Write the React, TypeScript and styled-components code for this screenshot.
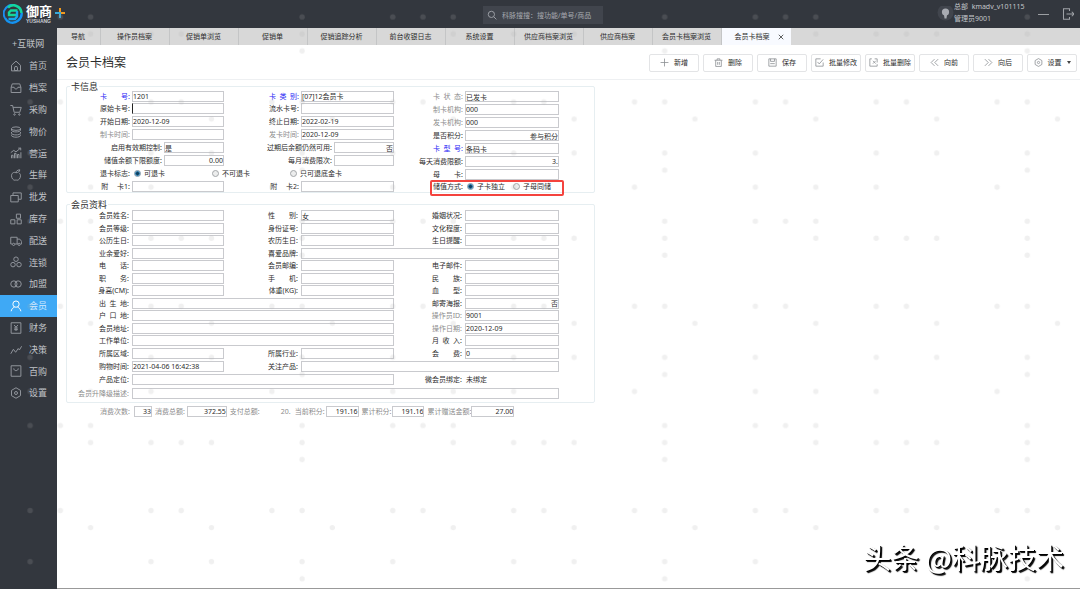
import React, { useId } from "react";
import styled, { createGlobalStyle, css } from "styled-components";

const GlobalStyle = createGlobalStyle`
  *, *::before, *::after { box-sizing: border-box; }
  body {
    margin: 0;
    background: #fff;
    color: #2c2c2c;
    font-family: "Noto Sans", "Noto Sans CJK SC", sans-serif;
    font-size: 7px;
    line-height: 11px;
  }
  button, input { font-family: inherit; font-size: inherit; line-height: inherit; color: inherit; }
`;

/* ---------- shell ---------- */

const Page = styled.div`
  display: flex;
  flex-direction: column;
  min-height: 100vh;
`;

const Header = styled.header`
  display: flex;
  align-items: center;
  justify-content: space-between;
  height: 28px;
  background: #33373e;
  color: #c3c6cb;
`;

const Brand = styled.a`
  display: flex;
  align-items: center;
  flex: 1;
  gap: 3px;
  padding-left: 3px;
  color: #fff;
  text-decoration: none;
`;

const BrandText = styled.span`
  display: flex;
  flex-direction: column;
`;

const BrandName = styled.span`
  font-size: 13px;
  line-height: 14px;
  font-weight: 700;
`;

const BrandLatin = styled.span`
  color: #c9ccd1;
  font-family: "Liberation Sans", sans-serif;
  font-size: 5px;
  line-height: 7px;
  font-weight: 700;
`;

const BrandPlus = styled.svg`
  align-self: flex-start;
  margin-top: 4px;
`;

const Search = styled.label`
  display: flex;
  align-items: center;
  gap: 5px;
  width: 120px;
  height: 18px;
  margin-top: 2px;
  margin-left: 9px;
  padding-left: 4px;
  background: #41454d;
  color: #a6a9af;
`;

const SearchInput = styled.input`
  flex: 1;
  min-width: 0;
  padding: 0;
  border: 0;
  outline: 0;
  background: transparent;
  &::placeholder { color: #a6a9af; opacity: 1; }
`;

const Account = styled.div`
  display: flex;
  flex: 1;
  align-items: center;
  justify-content: flex-end;
  padding-right: 6px;
`;

const AccountText = styled.div`
  display: flex;
  flex-direction: column;
  width: 84px;
  padding-bottom: 2px;
  line-height: 12px;
  white-space: pre;
`;

const IconButton = styled.button`
  display: flex;
  padding: 0;
  border: 0;
  background: none;
  color: #a0a3a8;
  & + & { margin-left: 13px; }
`;

const Body = styled.div`
  display: flex;
  flex: 1;
`;

const Sidebar = styled.nav`
  flex: 0 0 57px;
  background: #33373e;
  color: #c0c3c8;
  font-size: 9px;
`;

const SideHeading = styled.div`
  height: 27px;
  padding: 9px 0 0 12px;
  line-height: 13px;
`;

const SideList = styled.ul`
  margin: 0;
  padding: 0;
  list-style: none;
`;

const SideItem = styled.li`
  height: 22px;
  &:nth-child(5n) { height: 21px; }
`;

const SideLink = styled.a<{ $active?: boolean }>`
  display: flex;
  align-items: center;
  gap: 7px;
  height: 100%;
  padding: 0 0 1px 10px;
  color: ${(p) => (p.$active ? "#d5ecff" : "inherit")};
  background: ${(p) => (p.$active ? "#3fa9f5" : "transparent")};
  text-decoration: none;
  svg { color: ${(p) => (p.$active ? "#fff" : "#92969d")}; }
`;

const Main = styled.main`
  flex: 1;
  min-width: 0;
  border-bottom: 1px solid #999;
`;

const TabBar = styled.div`
  display: flex;
  height: 17px;
  background: #d8d8d8;
`;

const Tab = styled.button<{ $active?: boolean; $narrow?: boolean }>`
  display: flex;
  align-items: center;
  justify-content: center;
  gap: 8px;
  width: ${(p) => (p.$narrow ? 44 : 69)}px;
  padding: 0 ${(p) => (p.$active ? 0 : 4)}px 0 0;
  border: 0;
  border-right: 1px solid ${(p) => (p.$active ? "transparent" : "#c4c5c6")};
  background: ${(p) => (p.$active ? "#f8faff" : "transparent")};
  padding-left: ${(p) => (p.$active ? 6 : 3)}px;
  white-space: nowrap;
`;

const TitleBar = styled.div`
  display: flex;
  align-items: center;
  justify-content: space-between;
  height: 35px;
  padding: 1px 3px 0 9px;
  border-bottom: 1px solid #eef0f2;
`;

const Title = styled.h1`
  margin: 0;
  font-size: 12px;
  line-height: 18px;
  font-weight: 400;
`;

const Toolbar = styled.div`
  display: flex;
  gap: 4px;
`;

const ToolButton = styled.button`
  display: flex;
  align-items: center;
  justify-content: center;
  gap: 5px;
  width: 50px;
  height: 18px;
  padding: 0;
  border: 1px solid #e3e4e6;
  border-radius: 2px;
  background: #fff;
  white-space: nowrap;
  svg { color: #8a8d91; }
`;

/* ---------- form ---------- */

const Form = styled.form`
  display: flex;
  flex-direction: column;
  align-items: flex-start;
  padding: 6px 9px;
`;

const Section = styled.section`
  position: relative;
  display: flex;
  align-items: flex-start;
  width: 529px;
  border: 1px solid #e6eef1;
  border-radius: 2px;
  & + & { margin-top: 11px; }
`;

const SectionTitle = styled.h2`
  position: absolute;
  top: -7px;
  left: 3px;
  margin: 0;
  padding: 0 1px;
  background: #fff;
  font-size: 9px;
  line-height: 13px;
  font-weight: 400;
`;

const CardGrid = styled.div`
  display: grid;
  grid-template-columns: 157px 168px;
  grid-template-rows: 12px repeat(6, 13px) 12px;
  column-gap: 2px;
  align-items: center;
  padding-top: 3px;
`;

const CardStack = styled.div`
  display: grid;
  grid-template-columns: 163px;
  grid-template-rows: repeat(7, 13px) 11px;
  align-items: center;
  margin-left: 2px;
  padding-top: 3px;
`;

const MemberGrid = styled.div`
  display: grid;
  grid-template-columns: 157px 168px 163px;
  grid-template-rows: repeat(6, 13px 12px) 14px 13px 14px;
  column-gap: 2px;
  align-items: center;
  padding: 4px 0 2px;
`;

type Tone = "blue" | "grey" | "dark";
const tones: Record<Tone, string> = { blue: "#2a26f5", grey: "#8c8c8c", dark: "#2c2c2c" };

const FieldBox = styled.div<{ $area?: string }>`
  display: flex;
  align-items: center;
  min-width: 0;
  ${(p) => p.$area && css`grid-area: ${p.$area};`}
`;

const FieldLabel = styled.label<{ $tone: Tone; $inset: number }>`
  flex: 1;
  padding-right: ${(p) => p.$inset}px;
  color: ${(p) => tones[p.$tone]};
  text-align: right;
  white-space: pre;
`;

const TextBox = styled.input<{ $w: number; $right?: boolean; $caret?: boolean }>`
  flex: none;
  width: ${(p) => p.$w}px;
  height: 11px;
  padding: 0;
  border: 1px solid #c9cace;
  ${(p) => p.$caret && css`border-left-color: #222;`}
  border-radius: 0;
  outline: 0;
  background: #fff;
  line-height: 9px;
  text-align: ${(p) => (p.$right ? "right" : "left")};
`;

const PlainValue = styled.output<{ $w: number; $right?: boolean }>`
  flex: none;
  width: ${(p) => p.$w}px;
  padding: 0 1px;
  text-align: ${(p) => (p.$right ? "right" : "left")};
`;

const RadioRow = styled.div<{ $area?: string }>`
  display: flex;
  align-items: center;
  ${(p) => p.$area && css`grid-area: ${p.$area};`}
`;

const RadioCaption = styled.span<{ $w: number }>`
  width: ${(p) => p.$w}px;
  padding-right: 2px;
  text-align: right;
`;

const RadioOption = styled.label<{ $w: number }>`
  display: flex;
  align-items: center;
  gap: 3px;
  width: ${(p) => p.$w}px;
  padding-left: 2px;
  white-space: nowrap;
`;

const Radio = styled.input`
  appearance: none;
  width: 7px;
  height: 7px;
  margin: 0;
  border: 1px solid #a3a6a9;
  border-radius: 50%;
  background: #eceded;
  &:checked {
    border-color: #7f97a8;
    background: radial-gradient(circle, #10405f 0 1px, #2a7db0 2px, #d5e4ec 3px);
  }
`;

const Callout = styled.div`
  position: absolute;
  right: 30px;
  bottom: -4px;
  width: 134px;
  height: 16px;
  border: 2px solid #f4433e;
  border-radius: 2px;
  pointer-events: none;
`;

const Stats = styled.div`
  display: flex;
  align-items: center;
  margin-top: 3px;
  padding-left: 34px;
`;

const StatBox = styled.div<{ $gap: number }>`
  display: flex;
  align-items: center;
  gap: ${(p) => p.$gap}px;
  margin-right: 3px;
  color: ${tones.grey};
  white-space: nowrap;
  input { color: #2c2c2c; }
`;

/* ---------- overlays ---------- */

const DotLayer = styled.svg`
  position: fixed;
  inset: 0;
  width: 100%;
  height: 100%;
  pointer-events: none;
`;

const Signature = styled.div`
  position: fixed;
  right: 16px;
  bottom: 12px;
  color: #fff;
  font-family: "Noto Sans CJK SC", sans-serif;
  font-size: 28px;
  line-height: 40px;
  text-shadow: 1px 1px 0 #000, 2px 2px 1px #000;
  white-space: nowrap;
  pointer-events: none;
`;

/* ---------- icons ---------- */

const iconPaths: Record<string, React.ReactNode> = {
  home: <><path d="M2 7 8 1.5 14 7v7.5H2z" /><path d="M6 14v-3.500a2 2 0 0 1 4 0V14M6 14h4" /></>,
  file: <><path d="M1.500 7 3 2.500h10L14.500 7v7h-13zM1.500 7H5.500c.4 3 4.600 3 5 0h4" /></>,
  cart: <><path d="M.5 2h3l2 9h7.500l2-6.500H4.200" /><circle cx="6" cy="14" r="1" /><circle cx="12.500" cy="14" r="1" /></>,
  stack: <><ellipse cx="8" cy="3.500" rx="6" ry="2.300" /><path d="M2 3.500v2c0 3.200 12 3.200 12 0v-2M2 8v1.500c0 3.200 12 3.200 12 0V8M2 11.500v1c0 3.200 12 3.200 12 0v-1" /></>,
  chart: <><path d="M2 15v-4h2v4M6 15V8.500h2V15M10 15v-5h2v5M14.500 15V7M1 7.500l4-3 3 2L14 1.500M11 1.500h3.300v3" /></>,
  apple: <><path d="M8 5c-3-1.500-6 .5-6 4s2.500 6 4.500 6c1 0 1-.5 1.500-.5s.5.5 1.500.5c2 0 4.500-2.500 4.500-6 0-1.500-.5-2.500-1.500-3.500M8 5c0-2 1.500-3.500 5-4 0 2.500-2 4-5 4z" /></>,
  copy: <><path d="M1 6h10v8.500H1zM4 6V2.500h11V11h-4" /></>,
  blocks: <><path d="M1 9h5.500v5.500H1zM9.500 9H15v5.500H9.500zM8.500 1.500H14V7H8.500z" /></>,
  truck: <><path d="M3 12H1V3h8.500v9H6.500M9.500 5.500H13l2.500 3V12h-1.500M9.500 12H10.500" /><circle cx="4.800" cy="12.500" r="1.500" /><circle cx="12.200" cy="12.500" r="1.500" /></>,
  chain: <><circle cx="8" cy="4.300" r="3" /><circle cx="4" cy="11.500" r="3" /><circle cx="12" cy="11.500" r="3" /></>,
  rings: <><circle cx="5.200" cy="8" r="4.200" /><circle cx="10.800" cy="8" r="4.200" /></>,
  user: <><circle cx="8" cy="5.500" r="4.200" /><path d="M1.500 15c.7-3 2-4.500 4.500-5.500M14.500 15c-.7-3-2-4.500-4.500-5.500" /></>,
  money: <><path d="M1.500 1h13v14h-13zM5.500 4 8 7l2.500-3M8 7v5M5.500 8h5M5.500 10.200h5" /></>,
  trend: <path d="M1 13l3.500-6 3 4 3.500-5 1.500 2L15.500 3" />,
  bag: <><path d="M1.500 1h13v14h-13zM5 4.500c0 4 6 4 6 0" /></>,
  gear: <><path d="M8 1l6 3.500v7L8 15l-6-3.500v-7z" /><circle cx="8" cy="8" r="2" /></>,
  search: <><circle cx="7" cy="7" r="5" /><path d="M11 11l4 4" /></>,
  plus: <path d="M8 1v14M1 8h14" />,
  trash: <path d="M1 4h14M5.500 4V1.500h5V4M3 4v11h10V4M6.500 7v5M9.500 7v5" />,
  save: <path d="M1.500 1.500h13v13h-13zM4.500 1.500V6h7V1.500M4 10h8" />,
  edit: <path d="M14.500 8v6.500h-13v-13H10M4.500 7l3 3.500L14.500 2.500" />,
  erase: <path d="M5 1.500H1.500v13h13V11M14.500 8V1.500H10M7 5l5 5M12 5l-5 5" />,
  prev: <path d="M8 2 2 8l6 6M14.500 2l-6 6 6 6" />,
  next: <path d="M8 2l6 6-6 6M1.500 2l6 6-6 6" />,
  minus: <path d="M0 8h16" />,
  exit: <path d="M10 4V1H2v14h8v-3M6 8h10M13 5l3 3-3 3" />,
  close: <path d="M2 2l12 12M14 2 2 14" />,
};

function Icon({ name, size = 12, weight = 1.4 }: { name: string; size?: number; weight?: number }) {
  return (
    <svg width={size} height={size} viewBox="0 0 16 16" fill="none" stroke="currentColor" strokeWidth={weight} aria-hidden="true">
      {iconPaths[name]}
    </svg>
  );
}

function LogoMark() {
  return (
    <svg width="20" height="20" viewBox="0 0 20 20" fill="none" aria-hidden="true">
      <path d="M2 14A9 9 0 0 1 1 7C3 2 8 0 12 1" stroke="#1c8ef0" strokeWidth="2" />
      <path d="M5 3.500C10-1 18 2 18.500 9" stroke="#12d6a0" strokeWidth="2.600" />
      <path d="M18.700 9C19 15 13 20 7 18.300 4.500 17.500 3 16 2 14" stroke="#1593f2" strokeWidth="2.400" />
      <path d="M14.500 6.500H8L6 8.500V11h7" stroke="#14d79a" strokeWidth="2.400" />
      <path d="M14 7v5.500L12 15H5.500" stroke="#16a8ee" strokeWidth="2.400" />
    </svg>
  );
}

/* ---------- form parts ---------- */

type FieldProps = {
  label: string;
  w: number;
  value?: string;
  right?: boolean;
  caret?: boolean;
  tone?: Tone;
  area?: string;
  inset?: number;
  plain?: boolean;
};

function Field({ label, w, value = "", right, caret, tone = "dark", area, inset = 2, plain }: FieldProps) {
  const id = useId();
  return (
    <FieldBox $area={area}>
      <FieldLabel htmlFor={id} $tone={tone} $inset={inset}>{label}</FieldLabel>
      {plain ? (
        <PlainValue id={id} $w={w}>{value}</PlainValue>
      ) : (
        <TextBox id={id} $w={w} $right={right} $caret={caret} defaultValue={value} />
      )}
    </FieldBox>
  );
}

function Stat({ label, w, value, gap = 2, plain }: { label: string; w: number; value: string; gap?: number; plain?: boolean }) {
  const id = useId();
  return (
    <StatBox $gap={gap}>
      <label htmlFor={id}>{label}</label>
      {plain ? <PlainValue id={id} $w={w} $right>{value}</PlainValue> : <TextBox id={id} $w={w} $right defaultValue={value} />}
    </StatBox>
  );
}

/* ---------- data ---------- */

const menu: [string, string][] = [
  ["home", "首页"], ["file", "档案"], ["cart", "采购"], ["stack", "物价"],
  ["chart", "营运"], ["apple", "生鲜"], ["copy", "批发"], ["blocks", "库存"],
  ["truck", "配送"], ["chain", "连锁"], ["rings", "加盟"], ["user", "会员"],
  ["money", "财务"], ["trend", "决策"], ["bag", "百购"], ["gear", "设置"],
];

const tabs = ["导航", "操作员档案", "促销单浏览", "促销单", "促销追踪分析", "前台收银日志", "系统设置", "供应商档案浏览", "供应商档案", "会员卡档案浏览"];

const tools: [string, string][] = [
  ["plus", "新增"], ["trash", "删除"], ["save", "保存"], ["edit", "批量修改"],
  ["erase", "批量删除"], ["prev", "向前"], ["next", "向后"],
];

const cardFields: FieldProps[] = [
  { label: "卡　　号:", w: 92, value: "1201", tone: "blue", area: "1 / 1" },
  { label: "卡\u2002类\u2002别:", w: 93, value: "[07]12会员卡", tone: "blue", area: "1 / 2" },
  { label: "原始卡号:", w: 92, caret: true, area: "2 / 1" },
  { label: "流水卡号:", w: 93, area: "2 / 2" },
  { label: "开始日期:", w: 92, value: "2020-12-09", area: "3 / 1" },
  { label: "终止日期:", w: 93, value: "2022-02-19", area: "3 / 2" },
  { label: "制卡时间:", w: 92, tone: "grey", area: "4 / 1" },
  { label: "发卡时间:", w: 93, value: "2020-12-09", tone: "grey", area: "4 / 2" },
  { label: "启用有效期控制:", w: 60, value: "是", area: "5 / 1" },
  { label: "过期后余额仍然可用:", w: 60, value: "否", right: true, area: "5 / 2" },
  { label: "储值余额下限额度:", w: 60, value: "0.00", right: true, area: "6 / 1" },
  { label: "每月消费限次:", w: 60, area: "6 / 2" },
  { label: "附　 卡1:", w: 92, area: "8 / 1" },
  { label: "附　 卡2:", w: 93, area: "8 / 2" },
];

const cardStatus: FieldProps[] = [
  { label: "卡\u2002状\u2002态:", w: 94, value: "已发卡", tone: "grey" },
  { label: "制卡机构:", w: 94, value: "000", tone: "grey" },
  { label: "发卡机构:", w: 94, value: "000", tone: "grey" },
  { label: "是否积分:", w: 94, value: "参与积分", right: true },
  { label: "卡\u2002型\u2002号:", w: 94, value: "条码卡", tone: "blue" },
  { label: "每天消费限额:", w: 94, value: "3.", right: true },
  { label: "母　　卡:", w: 94 },
];

const memberFields: FieldProps[] = [
  { label: "会员姓名:", w: 92, area: "1 / 1" },
  { label: "性　　别:", w: 93, value: "女", area: "1 / 2" },
  { label: "婚姻状况:", w: 94, area: "1 / 3" },
  { label: "会员等级:", w: 92, area: "2 / 1" },
  { label: "身份证号:", w: 93, area: "2 / 2" },
  { label: "文化程度:", w: 94, area: "2 / 3" },
  { label: "公历生日:", w: 92, area: "3 / 1" },
  { label: "农历生日:", w: 93, area: "3 / 2" },
  { label: "生日提醒:", w: 94, area: "3 / 3" },
  { label: "业余爱好:", w: 92, area: "4 / 1" },
  { label: "喜爱品牌:", w: 258, area: "4 / 2 / 5 / 4" },
  { label: "电　　话:", w: 92, area: "5 / 1" },
  { label: "会员邮编:", w: 93, area: "5 / 2" },
  { label: "电子邮件:", w: 94, area: "5 / 3" },
  { label: "职　　务:", w: 92, area: "6 / 1" },
  { label: "手　　机:", w: 93, area: "6 / 2" },
  { label: "民　　族:", w: 94, area: "6 / 3" },
  { label: "身高(CM):", w: 92, area: "7 / 1" },
  { label: "体重(KG):", w: 93, area: "7 / 2" },
  { label: "血　　型:", w: 94, area: "7 / 3" },
  { label: "出\u2002生\u2002地:", w: 262, area: "8 / 1 / 9 / 3" },
  { label: "邮寄海报:", w: 94, value: "否", right: true, area: "8 / 3" },
  { label: "户\u2002口\u2002地:", w: 262, area: "9 / 1 / 10 / 3" },
  { label: "操作员ID:", w: 94, value: "9001", tone: "grey", area: "9 / 3" },
  { label: "会员地址:", w: 262, area: "10 / 1 / 11 / 3" },
  { label: "操作日期:", w: 94, value: "2020-12-09", tone: "grey", area: "10 / 3" },
  { label: "工作单位:", w: 262, area: "11 / 1 / 12 / 3" },
  { label: "月\u2002收\u2002入:", w: 94, area: "11 / 3" },
  { label: "所属区域:", w: 92, area: "12 / 1" },
  { label: "所属行业:", w: 93, area: "12 / 2" },
  { label: "会　　费:", w: 94, value: "0", area: "12 / 3" },
  { label: "购物时间:", w: 92, value: "2021-04-06 16:42:38", area: "13 / 1" },
  { label: "关注产品:", w: 258, area: "13 / 2 / 14 / 4" },
  { label: "产品定位:", w: 262, area: "14 / 1 / 15 / 3" },
  { label: "微会员绑定:", w: 94, value: "未绑定", plain: true, area: "14 / 3" },
  { label: "会员升降级描述:", w: 427, tone: "grey", area: "15 / 1 / 16 / 4" },
];

/* column numbers of the dots in each row of one tile */
const dotRows: number[][] = [
  [0, 3, 4, 7, 8, 11], [1, 5, 9], [], [0, 3, 7, 9], [0], [3, 5, 7, 11],
  [], [0, 3, 4, 5], [0, 5, 7, 8, 9], [0], [], [],
];

function Dots() {
  return (
    <DotLayer aria-hidden="true">
      <defs>
        <pattern id="dots" x="287" y="93.500" width="362.600" height="204.300" patternUnits="userSpaceOnUse">
          {dotRows.map((cols, r) =>
            cols.map((c) => <circle key={`${r}-${c}`} cx={15.1 + c * 30.22} cy={8.5 + r * 17.03} r="2.700" fill="#b0b0b0" fillOpacity=".19" />)
          )}
        </pattern>
      </defs>
      <rect width="100%" height="100%" fill="url(#dots)" />
    </DotLayer>
  );
}

export default function App() {
  return (
    <Page>
      <GlobalStyle />
      <Header>
        <Brand href="#" aria-label="御商">
          <LogoMark />
          <BrandText>
            <BrandName>御商</BrandName>
            <BrandLatin>YUSHANG</BrandLatin>
          </BrandText>
          <BrandPlus width="10" height="10" viewBox="0 0 10 10" fill="none" strokeWidth="2">
            <path d="M5 0v5h5" stroke="#f29a1d" />
            <path d="M0 5h5v5" stroke="#38a8d8" />
          </BrandPlus>
        </Brand>
        <Search>
          <Icon name="search" size={10} />
          <SearchInput aria-label="搜索" placeholder="科脉搜搜：搜功能/单号/商品" />
        </Search>
        <Account>
          <svg width="17" height="17" viewBox="0 0 17 17" aria-hidden="true">
            <circle cx="8.500" cy="6.500" r="8" fill="#41454d" />
            <circle cx="8.500" cy="6" r="3.600" fill="#a8abb2" />
            <path d="M7 9h3l-.5 3.500h-2z" fill="#a8abb2" />
          </svg>
          <AccountText>
            <span>{"总部  kmadv_v101115"}</span>
            <span>管理员9001</span>
          </AccountText>
          <IconButton aria-label="最小化"><Icon name="minus" size={11} /></IconButton>
          <IconButton aria-label="退出"><Icon name="exit" size={12} /></IconButton>
        </Account>
      </Header>
      <Body>
        <Sidebar>
          <SideHeading>+互联网</SideHeading>
          <SideList>
            {menu.map(([icon, text]) => (
              <SideItem key={text}>
                <SideLink href="#" $active={text === "会员"}>
                  <Icon name={icon} size={12} weight={1.3} />
                  {text}
                </SideLink>
              </SideItem>
            ))}
          </SideList>
        </Sidebar>
        <Main>
          <TabBar role="tablist">
            {tabs.map((t, i) => (
              <Tab key={t} role="tab" $narrow={i === 0}>{t}</Tab>
            ))}
            <Tab role="tab" aria-selected="true" $active>
              会员卡档案
              <Icon name="close" size={6} weight={2} />
            </Tab>
          </TabBar>
          <TitleBar>
            <Title>会员卡档案</Title>
            <Toolbar>
              {tools.map(([icon, text]) => (
                <ToolButton key={text} type="button">
                  <Icon name={icon} size={9} />
                  {text}
                </ToolButton>
              ))}
              <ToolButton type="button">
                <Icon name="gear" size={9} />
                设置
                <svg width="4" height="3" viewBox="0 0 4 3" aria-hidden="true"><path d="M0 0h4L2 3z" fill="#444" /></svg>
              </ToolButton>
            </Toolbar>
          </TitleBar>
          <Form>
            <Section>
              <SectionTitle>卡信息</SectionTitle>
              <CardGrid>
                {cardFields.map((f) => <Field key={f.label} {...f} />)}
                <RadioRow role="radiogroup" aria-label="退卡标志" $area="7 / 1 / 8 / 3">
                  <RadioCaption $w={65}>退卡标志:</RadioCaption>
                  <RadioOption $w={78}><Radio type="radio" name="refund" defaultChecked />可退卡</RadioOption>
                  <RadioOption $w={78}><Radio type="radio" name="refund" />不可退卡</RadioOption>
                  <RadioOption $w={78}><Radio type="radio" name="refund" />只可退底金卡</RadioOption>
                </RadioRow>
              </CardGrid>
              <CardStack>
                {cardStatus.map((f) => <Field key={f.label} {...f} />)}
                <RadioRow role="radiogroup" aria-label="储值方式">
                  <RadioCaption $w={69}>储值方式:</RadioCaption>
                  <RadioOption $w={46}><Radio type="radio" name="stored" defaultChecked />子卡独立</RadioOption>
                  <RadioOption $w={46}><Radio type="radio" name="stored" />子母同储</RadioOption>
                </RadioRow>
              </CardStack>
              <Callout />
            </Section>
            <Section>
              <SectionTitle>会员资料</SectionTitle>
              <MemberGrid>
                {memberFields.map((f) => <Field key={f.label} inset={3} {...f} />)}
              </MemberGrid>
            </Section>
            <Stats>
              <Stat label="消费次数:" w={18} value="33" gap={4} />
              <Stat label="消费总额:" w={40} value="372.55" />
              <Stat label="支付总额:" w={30} value="20." plain />
              <Stat label="当前积分:" w={33} value="191.16" gap={1} />
              <Stat label="累计积分:" w={32} value="191.16" gap={1} />
              <Stat label="累计赠送金额:" w={43} value="27.00" gap={0} />
            </Stats>
          </Form>
        </Main>
      </Body>
      <Dots />
      <Signature>头条 @科脉技术</Signature>
    </Page>
  );
}
